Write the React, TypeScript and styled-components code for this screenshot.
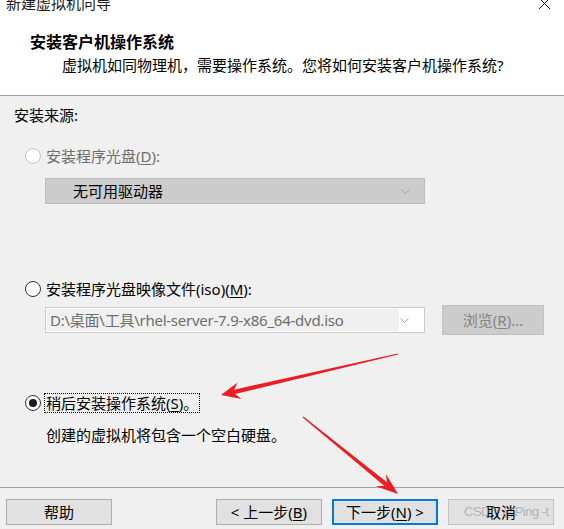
import React from "react";
import styled, { createGlobalStyle } from "styled-components";

const FONT = `"Noto Sans", "Noto Sans CJK SC", sans-serif`;

const Global = createGlobalStyle`
  html, body { margin: 0; padding: 0; background: #f0f0f0; }
  body { font-family: ${FONT}; }
`;

const Window = styled.div`
  position: relative;
  width: 564px;
  height: 529px;
  overflow: hidden;
  background: #f0f0f0;
  font-family: ${FONT};
  font-size: 15px;
  line-height: 20px;
  color: #000;
  display: flex;
  flex-direction: column;
`;

const Header = styled.header`
  height: 95px;
  flex-shrink: 0;
  background: #fff;
  border-bottom: 1px solid #a0a0a0;
  display: flex;
  flex-direction: column;
`;

const TitleBar = styled.div`
  height: 13px;
  display: flex;
  justify-content: space-between;
  align-items: flex-end;
  overflow: hidden;
  padding: 0 14px 0 6px;
`;

const WindowTitle = styled.span`
  line-height: 20px;
  white-space: nowrap;
  color: #1a1a1a;
`;

const CloseIcon = styled.svg`
  align-self: flex-start;
  overflow: visible;
`;

const PageTitle = styled.div`
  margin: 19px 0 0 30px;
  font-size: 16px;
  font-weight: 700;
`;

const PageSubtitle = styled.div`
  margin: 3px 0 0 62px;
  white-space: nowrap;
`;

const Body = styled.main`
  height: 391px;
  flex-shrink: 0;
  box-sizing: border-box;
  padding: 9px 0 0 14px;
  display: flex;
  flex-direction: column;
  align-items: flex-start;
`;

const SectionLabel = styled.div``;

const RadioRow = styled.div<{ $top: number }>`
  display: flex;
  align-items: center;
  height: 20px;
  margin: ${(p) => p.$top}px 0 0 11px;
`;

const RadioCircle = styled.span<{ $checked?: boolean; $disabled?: boolean }>`
  position: relative;
  width: 16px;
  height: 16px;
  box-sizing: border-box;
  border-radius: 50%;
  background: #fff;
  border: 1px solid ${(p) => (p.$disabled ? "#c2c2c2" : "#333")};
  flex-shrink: 0;
  &::after {
    content: "";
    display: ${(p) => (p.$checked ? "block" : "none")};
    position: absolute;
    left: 3px;
    top: 3px;
    width: 8px;
    height: 8px;
    border-radius: 50%;
    background: #1a1a1a;
  }
`;

const RadioLabel = styled.span<{ $disabled?: boolean; $focused?: boolean }>`
  margin-left: 3px;
  padding: 0 1px;
  line-height: 18px;
  border: 1px dotted ${(p) => (p.$focused ? "#000" : "transparent")};
  color: ${(p) => (p.$disabled ? "#6d6d6d" : "#000")};
  white-space: nowrap;
`;

const Key = styled.u`
  text-decoration: underline;
  text-underline-offset: 2px;
`;

const Combo = styled.div<{ $top: number; $variant: "disabled" | "readonly" }>`
  width: 380px;
  height: 26px;
  box-sizing: border-box;
  margin: ${(p) => p.$top}px 0 0 31px;
  display: flex;
  align-items: stretch;
  background: ${(p) => (p.$variant === "disabled" ? "#cccccc" : "#fff")};
  border: 1px solid ${(p) => (p.$variant === "disabled" ? "#bcbcbc" : "#cacaca")};
  padding: ${(p) => (p.$variant === "disabled" ? "0" : "1px")};
`;

const ComboText = styled.div<{ $variant: "disabled" | "readonly" }>`
  flex: 1;
  display: flex;
  align-items: center;
  padding-left: ${(p) => (p.$variant === "disabled" ? "27px" : "3px")};
  background: ${(p) => (p.$variant === "disabled" ? "transparent" : "#f0f0f0")};
  color: ${(p) => (p.$variant === "disabled" ? "#000" : "#6d6d6d")};
  letter-spacing: ${(p) => (p.$variant === "disabled" ? "0" : "-0.25px")};
  white-space: nowrap;
  overflow: hidden;
`;

const ComboArrow = styled.div`
  width: 23px;
  display: flex;
  align-items: center;
  justify-content: flex-start;
  padding-left: 1px;
`;

const FileRow = styled.div`
  display: flex;
  align-items: center;
  margin-top: 6px;
  height: 30px;
`;

const BrowseButton = styled.button`
  margin-left: 17px;
  width: 102px;
  height: 30px;
  box-sizing: border-box;
  background: #cccccc;
  border: 1px solid #bfbfbf;
  color: #838383;
  font: inherit;
  padding: 0;
`;

const Description = styled.div`
  margin: 12px 0 0 32px;
`;

const Footer = styled.footer`
  flex: 1;
  border-top: 1px solid #a0a0a0;
  box-sizing: border-box;
  padding: 11px 10px 0 6px;
  display: flex;
  justify-content: space-between;
  align-items: flex-start;
`;

const ButtonGroup = styled.div`
  display: flex;
  gap: 10px;
`;

const Button = styled.button<{ $default?: boolean; $soft?: boolean }>`
  position: relative;
  width: 106px;
  height: 26px;
  box-sizing: border-box;
  background: #e1e1e1;
  border: ${(p) =>
    p.$default ? "2px solid #0078d7" : `1px solid ${p.$soft ? "#c4c4c4" : "#adadad"}`};
  font: inherit;
  color: #000;
  padding: 0;
  white-space: nowrap;
`;

const ButtonText = styled.span`
  position: relative;
`;

const Watermark = styled.span`
  position: absolute;
  left: 15px;
  top: 4px;
  font-family: "Liberation Sans", Arial, sans-serif;
  font-size: 13px;
  line-height: 16px;
  letter-spacing: -0.5px;
  color: #b3b3b3;
  white-space: nowrap;
`;

const Annotations = styled.svg`
  position: absolute;
  left: 0;
  top: 0;
  pointer-events: none;
`;

const Chevron = () => (
  <svg width="9" height="5" viewBox="0 0 9 5">
    <polyline points="0.5,0.5 4.5,4.5 8.5,0.5" fill="none" stroke="#a3a3a3" strokeWidth="1" />
  </svg>
);

export default function App() {
  return (
    <>
      <Global />
      <Window>
        <Header>
          <TitleBar>
            <WindowTitle>新建虚拟机向导</WindowTitle>
            <CloseIcon width="11" height="10" viewBox="0 0 11 10">
              <line x1="0" y1="-2" x2="11" y2="9" stroke="#111" strokeWidth="1" />
              <line x1="11" y1="-2" x2="0" y2="9" stroke="#111" strokeWidth="1" />
            </CloseIcon>
          </TitleBar>
          <PageTitle>安装客户机操作系统</PageTitle>
          <PageSubtitle>虚拟机如同物理机，需要操作系统。您将如何安装客户机操作系统?</PageSubtitle>
        </Header>

        <Body>
          <SectionLabel>安装来源:</SectionLabel>

          <RadioRow $top={21}>
            <RadioCircle $disabled />
            <RadioLabel $disabled>
              安装程序光盘(<Key>D</Key>):
            </RadioLabel>
          </RadioRow>
          <Combo $top={12} $variant="disabled">
            <ComboText $variant="disabled">无可用驱动器</ComboText>
            <ComboArrow>
              <Chevron />
            </ComboArrow>
          </Combo>

          <RadioRow $top={75}>
            <RadioCircle />
            <RadioLabel>
              安装程序光盘映像文件(iso)(<Key>M</Key>):
            </RadioLabel>
          </RadioRow>
          <FileRow>
            <Combo $top={0} $variant="readonly">
              <ComboText $variant="readonly">D:\桌面\工具\rhel-server-7.9-x86_64-dvd.iso</ComboText>
              <ComboArrow>
                <Chevron />
              </ComboArrow>
            </Combo>
            <BrowseButton>
              浏览(<Key>R</Key>)...
            </BrowseButton>
          </FileRow>

          <RadioRow $top={58}>
            <RadioCircle $checked />
            <RadioLabel $focused>
              稍后安装操作系统(<Key>S</Key>)。
            </RadioLabel>
          </RadioRow>
          <Description>创建的虚拟机将包含一个空白硬盘。</Description>
        </Body>

        <Footer>
          <Button>帮助</Button>
          <ButtonGroup>
            <Button>
              &lt; 上一步(<Key>B</Key>)
            </Button>
            <Button $default>
              下一步(<Key>N</Key>) &gt;
            </Button>
            <Button $soft>
              <Watermark>CSDN @Ping -t</Watermark>
              <ButtonText>取消</ButtonText>
            </Button>
          </ButtonGroup>
        </Footer>

        <Annotations width="564" height="529" viewBox="0 0 564 529">
          <polygon
            fill="#ea1c24"
            points="397.86,353.42 234.14,389.70 237.59,382.43 221,395 241.43,398.99 235.14,393.98 398.14,354.58"
          />
          <polygon
            fill="#ea1c24"
            points="302.62,417.47 384.19,485.63 375.87,486.36 398,494 385.95,473.94 386.96,482.21 303.38,416.53"
          />
        </Annotations>
      </Window>
    </>
  );
}
